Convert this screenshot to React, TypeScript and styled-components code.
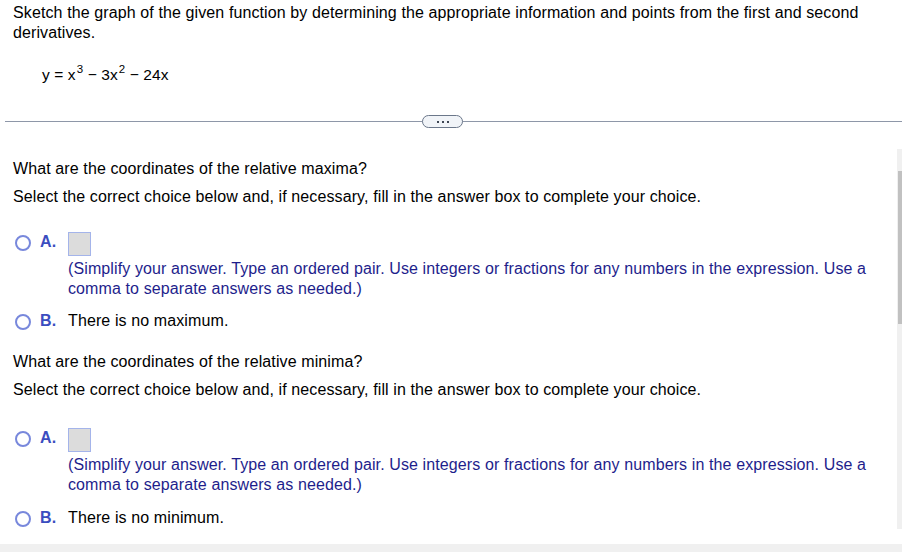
import React from "react";
import styled, { createGlobalStyle } from "styled-components";

const Global = createGlobalStyle`
  html, body { margin: 0; padding: 0; background: #ffffff; }
  body { font-family: "Liberation Sans", Arial, sans-serif; color: #000; letter-spacing: 0.11px; }
`;

const Page = styled.div`
  width: 902px;
  height: 552px;
  overflow: hidden;
  display: flex;
  flex-direction: column;
`;

const Intro = styled.div`
  padding: 3px 30px 0 13px;
  font-size: 16px;
  line-height: 20px;
`;

const Equation = styled.div`
  margin: 22px 0 0 42px;
  font-size: 15.5px;
  line-height: 20px;
  sup { font-size: 11.5px; vertical-align: 0; position: relative; top: -7px; margin-left: 1px; }
`;

const DividerRow = styled.div`
  margin: 29px 0 0 5px;
  position: relative;
  height: 13px;
  display: flex;
  align-items: center;
  justify-content: center;
  &::before {
    content: "";
    position: absolute;
    left: 0;
    right: 0;
    top: 6px;
    height: 1px;
    background: #8e97a8;
  }
`;

const Pill = styled.div`
  position: relative;
  width: 39px;
  height: 11px;
  border: 1px solid #6b778a;
  border-radius: 7px;
  background: #f1f4f8;
  display: flex;
  align-items: center;
  justify-content: center;
  gap: 3px;
  margin-left: -22px;
`;

const Dot = styled.span`
  width: 2px;
  height: 2px;
  background: #3e4654;
`;

const ScrollArea = styled.div`
  margin-top: 21px;
  height: 380px;
  display: flex;
  overflow: hidden;
`;

const Content = styled.div`
  flex: 1;
  padding: 10px 20px 0 13px;
  font-size: 16px;
  line-height: 20px;
`;

const Track = styled.div`
  width: 5px;
  background: #f0f0f0;
  position: relative;
`;

const Thumb = styled.div`
  position: absolute;
  left: 1px;
  right: 0;
  top: 22px;
  height: 153px;
  background: #c1c1c1;
`;

const Question = styled.div<{ $first?: boolean }>`
  margin-top: ${(p) => (p.$first ? 0 : 22)}px;
`;

const Select = styled.div`
  margin-top: 8px;
`;

const Option = styled.div<{ $gap: number }>`
  display: grid;
  grid-template-columns: 27px 28px 1fr;
  align-items: start;
  margin-top: ${(p) => p.$gap}px;
`;

const Radio = styled.span<{ $offset?: number }>`
  margin-top: ${(p) => p.$offset ?? 1}px;
  margin-left: 2px;
  width: 12px;
  height: 12px;
  border: 2px solid #7888dc;
  border-radius: 50%;
  background: #fff;
  display: block;
`;

const Letter = styled.span<{ $lh?: number }>`
  font-weight: bold;
  color: #3b4dbf;
  line-height: ${(p) => p.$lh ?? 16}px;
`;

const OptionBody = styled.div`
  display: flex;
  flex-direction: column;
`;

const AnswerBox = styled.div`
  width: 21px;
  height: 22px;
  border: 1px solid #a4b4ea;
  background: #dcdcdc;
`;

const Note = styled.div`
  margin-top: 3px;
  color: #1e1e8c;
  line-height: 20px;
`;

const OptionText = styled.span`
  line-height: 16px;
`;

const Footer = styled.div`
  margin-top: 15px;
  flex: 1;
  background: #f0f0f0;
`;

const Block = ({ first, word }: { first?: boolean; word: string }) => (
  <>
    <Question $first={first}>What are the coordinates of the relative {word === "maximum" ? "maxima" : "minima"}?</Question>
    <Select>Select the correct choice below and, if necessary, fill in the answer box to complete your choice.</Select>
    <Option $gap={first ? 25 : 28}>
      <Radio $offset={3} />
      <Letter $lh={20}>A.</Letter>
      <OptionBody>
        <AnswerBox />
        <Note>
          (Simplify your answer. Type an ordered pair. Use integers or fractions for any numbers in the expression. Use a
          comma to separate answers as needed.)
        </Note>
      </OptionBody>
    </Option>
    <Option $gap={first ? 14 : 15}>
      <Radio />
      <Letter>B.</Letter>
      <OptionText>There is no {word}.</OptionText>
    </Option>
  </>
);

export default function App() {
  return (
    <Page>
      <Global />
      <Intro>
        Sketch the graph of the given function by determining the appropriate information and points from the first and second
        derivatives.
      </Intro>
      <Equation>
        y = x<sup>3</sup> − 3x<sup>2</sup> − 24x
      </Equation>
      <DividerRow>
        <Pill>
          <Dot />
          <Dot />
          <Dot />
        </Pill>
      </DividerRow>
      <ScrollArea>
        <Content>
          <Block first word="maximum" />
          <Block word="minimum" />
        </Content>
        <Track>
          <Thumb />
        </Track>
      </ScrollArea>
      <Footer />
    </Page>
  );
}
